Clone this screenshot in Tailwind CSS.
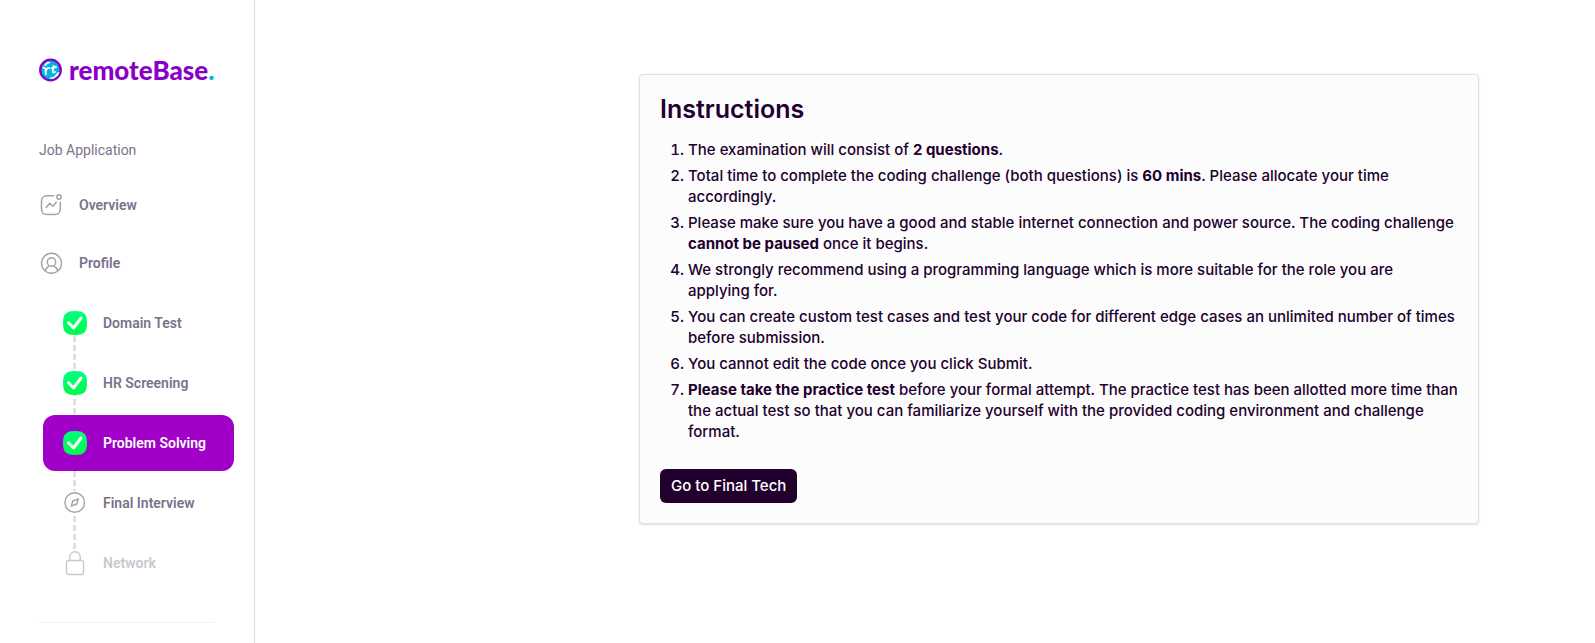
<!DOCTYPE html>
<html lang="en">
<head>
<meta charset="utf-8">
<meta name="viewport" content="width=device-width, initial-scale=1">
<title>remoteBase – Problem Solving</title>
<script src="https://cdn.jsdelivr.net/npm/@tailwindcss/browser@4"></script>
</head>
<body class="flex min-h-screen bg-white font-['Roboto',sans-serif]">
<svg class="absolute size-0" aria-hidden="true">
  <defs>
    <linearGradient id="green" x1="0" y1="0" x2="0" y2="1"><stop offset="0" stop-color="#00ff7f"/><stop offset="1" stop-color="#00fa4c"/></linearGradient>
    <symbol id="done" viewBox="0 0 24 24">
      <path d="M12 0C21 0 24 3 24 12S21 24 12 24 0 21 0 12 3 0 12 0z" fill="url(#green)"/>
      <path d="M5.500 11.800l5 5.200 7.500-10" fill="none" stroke="#fff" stroke-width="3" stroke-linecap="round" stroke-linejoin="round"/>
    </symbol>
  </defs>
</svg>

<aside class="w-[255px] shrink-0 border-r border-[#dedede] pt-[54px]">
  <a href="#" class="ml-[39px] flex h-8 items-center gap-[6px]" aria-label="remoteBase">
    <svg class="size-6" viewBox="0 0 24 24" fill="none">
      <circle cx="11.500" cy="12" r="10.300" fill="#00b5e2" stroke="#8800c7" stroke-width="2.300"/>
      <path d="M4.500 7.500l3.500-3.500 3.500-.3-1.200 1.800-2.300.5-.5 1.700zM18.500 14.500l2-.5-1.500 3.500-4 3-4.500.5 1-1.500 3.500-.8z" fill="#fff"/>
      <path d="M4.300 9.500l2.200 1.300.3 5.500M7.300 12c.4-1.800 1.700-2.300 3.200-1.800M14.600 8l-.9 4.700c-.2 1.800.9 2.200 2.300 1.300M13 10l4-1" stroke="#fff" stroke-width="1.900" stroke-linecap="round"/>
    </svg>
    <span class="font-['Lato',sans-serif] text-[26px] leading-8 font-black text-[#8800c7]">remoteBase<span class="text-[#00b5e2]">.</span></span>
  </a>

  <h2 class="mt-[54px] ml-[39px] text-[14px] leading-5 text-[#7b7289]">Job Application</h2>

  <nav class="mt-4 text-[14px] font-semibold text-[#7b7289]">
    <a href="#" class="ml-[39px] flex h-[58px] items-center gap-4">
      <svg class="size-6" viewBox="0 0 24 24" fill="none" stroke="#a3a3a3" stroke-width="1.500" stroke-linecap="round" stroke-linejoin="round">
        <path d="M14.500 2.700H8.500c-4.500 0-6 1.500-6 6v6.800c0 4.500 1.500 6 6 6h6.800c4.500 0 6-1.500 6-6V9.500"/>
        <circle cx="20" cy="4" r="2.200"/>
        <path d="M7.200 14.500l3.500-4.300 3.300 3 3.300-4"/>
      </svg>
      Overview
    </a>
    <a href="#" class="ml-[39px] flex h-[58px] items-center gap-4">
      <svg class="size-6" viewBox="0 0 24 24" fill="none" stroke="#a3a3a3" stroke-width="1.400" stroke-linecap="round">
        <circle cx="12.500" cy="12.300" r="10"/><circle cx="12.500" cy="11" r="4.200"/>
        <path d="M6.300 19.800c.6-2.500 2-4 3.800-5M18.700 19.800c-.6-2.500-2-4-3.800-5"/>
      </svg>
      Profile
    </a>

    <ol class="relative isolate mt-[3px] ml-[43px] flex w-[191px] flex-col gap-1">
      <!-- dashed track joining the steps -->
      <li aria-hidden="true" class="absolute top-[41px] left-[30px] -z-10 h-[214px] w-[3px] bg-[repeating-linear-gradient(#e0e0e0_0_6px,transparent_6px_9px)]"></li>
      <li><a href="#" class="flex h-14 items-center gap-4 rounded-xl px-5"><svg class="size-6"><use href="#done"/></svg>Domain Test</a></li>
      <li><a href="#" class="flex h-14 items-center gap-4 rounded-xl px-5"><svg class="size-6"><use href="#done"/></svg>HR Screening</a></li>
      <li><a href="#" aria-current="step" class="flex h-14 items-center gap-4 rounded-xl bg-[#a100c8] px-5 text-white"><svg class="size-6"><use href="#done"/></svg>Problem Solving</a></li>
      <li><a href="#" class="flex h-14 items-center gap-4 rounded-xl px-5">
        <svg class="size-6 bg-white" viewBox="0 0 24 24" fill="none" stroke="#a3a3a3" stroke-width="1.400" stroke-linejoin="round">
          <circle cx="11.700" cy="11.500" r="9.800"/>
          <path d="M15.300 7.800l-1.500 5.200-5.500 2.200 1.500-5.200z"/>
        </svg>Final Interview</a></li>
      <li><a href="#" aria-disabled="true" class="flex h-14 items-center gap-4 rounded-xl px-5 text-[#cac7d0]">
        <svg class="size-6 overflow-visible bg-white" viewBox="0 0 24 24" fill="none" stroke="#cac7d0" stroke-width="1.400">
          <rect x="3.500" y="9.500" width="17" height="14" rx="2"/>
          <path d="M6.700 9.500V6a5.300 5.300 0 0 1 10.600 0v3.500"/>
        </svg>Network</a></li>
    </ol>
  </nav>
  <hr class="mt-[31px] mr-10 ml-[39px] border-[#eaf1f8]">
</aside>

<main class="min-w-0 flex-1 pt-[74px] pr-[116px] pb-10 pl-10 font-['Inter',sans-serif] text-[#21002e]">
  <section class="ml-auto w-full max-w-[840px] rounded border border-[#e0e0e0] bg-[#fcfcfc] p-5 shadow-sm">
    <h1 class="text-[25px] leading-7 font-semibold">Instructions</h1>
    <ol class="mt-4 list-decimal space-y-[5px] pl-7 text-[15px] leading-[21px] font-medium">
      <li>The examination will consist of <strong class="font-bold">2 questions</strong>.</li>
      <li>Total time to complete the coding challenge (both questions) is <strong class="font-bold">60 mins</strong>. Please allocate your time accordingly.</li>
      <li>Please make sure you have a good and stable internet connection and power source. The coding challenge <strong class="font-bold">cannot be paused</strong> once it begins.</li>
      <li>We strongly recommend using a programming language which is more suitable for the role you are applying for.</li>
      <li>You can create custom test cases and test your code for different edge cases an unlimited number of times before submission.</li>
      <li>You cannot edit the code once you click Submit.</li>
      <li><strong class="font-bold">Please take the practice test</strong> before your formal attempt. The practice test has been allotted more time than the actual test so that you can familiarize yourself with the provided coding environment and challenge format.</li>
    </ol>
    <button type="button" class="mt-[27px] block h-[34px] rounded-md bg-[#21002e] px-[11px] text-[15px] font-medium text-white">Go to Final Tech</button>
  </section>
</main>
</body>
</html>
